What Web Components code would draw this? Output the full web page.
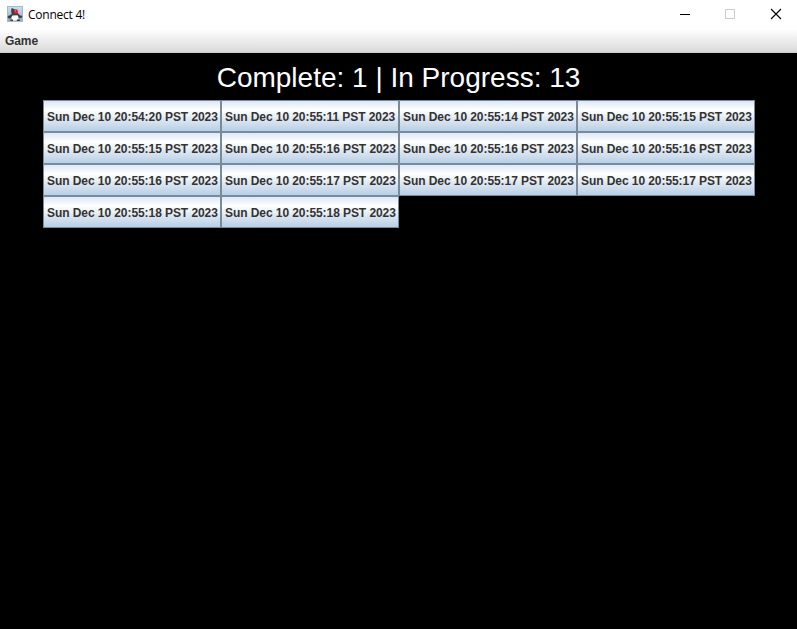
<!DOCTYPE html>
<html lang="en">
<head>
<meta charset="utf-8">
<title>Connect 4!</title>
<style>
html,body{margin:0;height:100%;background:#000;overflow:hidden}
</style>
</head>
<body>
<game-window></game-window>
<script>
function define(name, markup, setup){
  const t=document.createElement('template');
  t.innerHTML=markup;
  customElements.define(name, class extends HTMLElement{
    constructor(){
      super();
      this.attachShadow({mode:'open'}).append(t.content.cloneNode(true));
      if(setup) setup(this.shadowRoot);
    }
  });
}
define('title-bar', `
<style>
:host{display:flex;align-items:center;height:29px;background:#fff;color:#000;font:12px "Open Sans",sans-serif}
.icon{width:16px;height:16px;margin:0 5px 1px 7px;flex:none}
.name{flex:1;letter-spacing:-.24px;line-height:16px;padding-top:1px}
.controls{display:flex;height:29px}
.controls svg{width:46px;height:29px;display:block;margin-right:-.5px}
</style>
<svg class="icon" viewBox="0 0 16 16">
  <defs><linearGradient id="g" x2="0" y2="1"><stop stop-color="#d3dfec"/><stop offset="1" stop-color="#8fa5bd"/></linearGradient></defs>
  <rect x=".5" y=".5" width="15" height="15" fill="url(#g)" stroke="#a9b8c9"/>
  <path d="M5 7.5 4.6 12 5 14.6h5.8l.4-2.6-.7-4z" fill="#fff"/>
  <path d="M4.6 2C4 3.8 4 6 4.8 8L2.6 9.6.8 10v2l2.6.7L5.4 9.4l5.2-.2 1.6 3 3-.6-.1-1.9-2-.2-2.2-2.3C9.6 4.6 7.2 2.6 4.6 2Z" fill="#3b3f44"/>
  <path d="M3.4 14.2h2.6M9.8 14.2h3" fill="none" stroke="#3a4149" stroke-width="1.4"/>
  <circle cx="8.8" cy="5.5" r="2.2" fill="#dc2229"/>
  <circle cx="8.4" cy="4.8" r=".6" fill="#f28d84"/>
</svg>
<span class="name"><slot></slot></span>
<span class="controls">
<svg viewBox="0 0 46 29"><path d="M19 14.5h10" stroke="#000" shape-rendering="crispEdges"/></svg>
<svg viewBox="0 0 46 29"><path d="M19.5 9.5h9v9h-9z" fill="none" stroke="#ccc" shape-rendering="crispEdges"/></svg>
<svg viewBox="0 0 46 29"><path d="m19 9 10 10m0-10-10 10" stroke="#000" stroke-width="1.1"/></svg>
</span>`);
define('menu-bar', `
<style>
:host{display:flex;align-items:center;box-sizing:border-box;height:24px;padding:0 0 0 5px;
background:linear-gradient(#fff,#dadada);border-bottom:1px solid #ccc;color:#333;font:bold 12px "Liberation Sans",Arial,sans-serif;letter-spacing:-.1px}
</style><slot></slot>`);
define('status-line', `
<style>
:host{display:block;height:47px;line-height:49px;text-align:center;color:#fff;font-family:"Liberation Sans",Arial,sans-serif;font-size:28px;white-space:nowrap}
</style><slot></slot>`);
define('game-button', `
<style>
:host{display:flex;align-items:center;box-sizing:border-box;height:32px;padding:2px 0 0 3px;border:1px solid #7a8a99;
background:linear-gradient(#dde8f3,#fff 30%,#dde8f3 60%,#b8cfe5);color:#333;font:bold 12px "Liberation Sans",Arial,sans-serif;letter-spacing:-.07px;white-space:nowrap}
</style><span><slot></slot></span>`);
define('game-grid', `
<style>
:host{display:grid;grid-template-columns:repeat(4,178px);padding-left:43px}
</style>`, root=>{
  ['54:20','55:11','55:14','55:15','55:15','55:16','55:16','55:16','55:16','55:17','55:17','55:17','55:18','55:18'].forEach(s=>{
    const b=document.createElement('game-button');
    b.textContent='Sun Dec 10 20:'+s+' PST 2023';
    root.append(b);
  });
});
define('game-window', `
<style>
:host{display:flex;flex-direction:column;height:100vh;background:#000}
</style>
<title-bar>Connect 4!</title-bar>
<menu-bar>Game</menu-bar>
<status-line>Complete: 1 | In Progress: 13</status-line>
<game-grid></game-grid>`);
</script>
</body>
</html>
